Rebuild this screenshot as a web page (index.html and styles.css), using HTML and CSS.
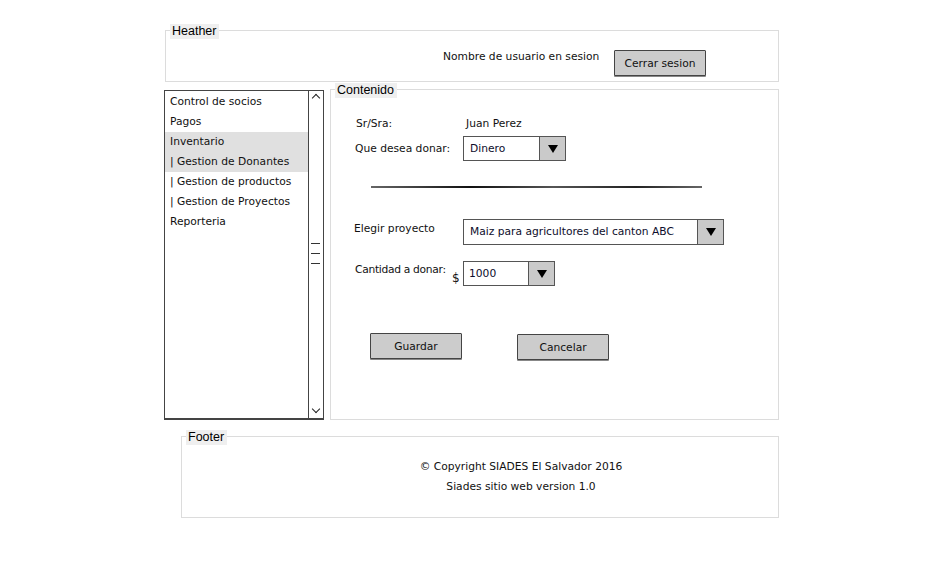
FILE: index.html
```html
<!DOCTYPE html>
<html lang="es">
<head>
    <meta charset="UTF-8">
    <meta name="viewport" content="width=device-width, initial-scale=1.0">
    <title>SIADES - Donaciones</title>
    <link rel="stylesheet" href="styles.css">
</head>
<body>
    <div class="page">
        <div class="panel header">
            <span class="legend">Heather</span>
            <div class="user-bar">
                <span class="user-name">Nombre de usuario en sesion</span>
                <button class="btn">Cerrar sesion</button>
            </div>
        </div>

        <div class="main">
            <div class="menu">
                <ul class="menu-list">
                    <li>Control de socios</li>
                    <li>Pagos</li>
                    <li class="selected">Inventario</li>
                    <li class="selected">| Gestion de Donantes</li>
                    <li>| Gestion de productos</li>
                    <li>| Gestion de Proyectos</li>
                    <li>Reporteria</li>
                </ul>
                <div class="scrollbar">
                    <span class="arrow-up"></span>
                    <div class="thumb">
                        <span></span><span></span><span></span>
                    </div>
                    <span class="arrow-down"></span>
                </div>
            </div>

            <div class="panel content">
                <span class="legend">Contenido</span>
                <div class="form">
                    <div class="form-row row-name">
                        <span class="label">Sr/Sra:</span>
                        <span class="value">Juan Perez</span>
                    </div>
                    <div class="form-row">
                        <span class="label">Que desea donar:</span>
                        <div class="select select-small">
                            <span class="select-text">Dinero</span>
                            <span class="select-arrow"><i></i></span>
                        </div>
                    </div>
                    <div class="divider"></div>
                    <div class="form-row row-project">
                        <span class="label label-up">Elegir proyecto</span>
                        <div class="select select-wide">
                            <span class="select-text">Maiz para agricultores del canton ABC</span>
                            <span class="select-arrow"><i></i></span>
                        </div>
                    </div>
                    <div class="form-row row-amount">
                        <span class="label label-up">Cantidad a donar:</span>
                        <span class="currency">$</span>
                        <div class="select select-amount">
                            <span class="select-text">1000</span>
                            <span class="select-arrow"><i></i></span>
                        </div>
                    </div>
                    <div class="actions">
                        <button class="btn btn-save">Guardar</button>
                        <button class="btn btn-cancel">Cancelar</button>
                    </div>
                </div>
            </div>
        </div>

        <div class="panel footer">
            <span class="legend">Footer</span>
            <p>&copy; Copyright SIADES El Salvador 2016</p>
            <p>Siades sitio web version 1.0</p>
        </div>
    </div>
</body>
</html>
```

FILE: styles.css
```css
body {
    margin: 0;
    background: #fff;
    font-family: "DejaVu Sans", sans-serif;
    font-size: 10.7px;
    color: #111;
}
.page {
    padding: 30px 0 0 164px;
}
.panel {
    position: relative;
    border: 1px solid #dcdcdc;
    box-sizing: border-box;
}
.legend {
    position: absolute;
    top: -7px;
    left: 4px;
    padding: 0 3px 0 2px;
    background: #efefef;
    font-family: "Liberation Sans", sans-serif;
    font-size: 12.5px;
    line-height: 15px;
    color: #000;
}

/* header */
.header {
    margin-left: 1px;
    width: 614px;
    height: 52px;
}
.user-bar {
    display: flex;
    align-items: flex-start;
    padding: 19px 0 0 277px;
}
.user-name {
    width: 171px;
    line-height: 14px;
}
.btn {
    width: 92px;
    height: 26px;
    padding: 0;
    background: #cccccc;
    border: 1px solid #444;
    border-radius: 1px;
    font-family: "DejaVu Sans", sans-serif;
    font-size: 10.7px;
    color: #111;
    box-shadow: 0 1px 0 #888;
}

/* main row */
.main {
    display: flex;
    gap: 6px;
    margin-top: 7px;
}
.menu {
    display: flex;
    width: 160px;
    height: 330px;
    margin-top: 1px;
    box-sizing: border-box;
    border: 1px solid #444;
    border-bottom-width: 2px;
}
.menu-list {
    flex: 1;
    list-style: none;
    margin: 0;
    padding: 0;
}
.menu-list li {
    height: 20px;
    line-height: 20px;
    padding-left: 5px;
}
.menu-list li:first-child {
    margin-top: 1px;
}
.menu-list li.selected {
    background: #e0e0e0;
}
.scrollbar {
    position: relative;
    width: 14px;
    border-left: 1px solid #444;
}
.arrow-up,
.arrow-down {
    position: absolute;
    left: 4px;
    width: 5px;
    height: 5px;
    border-left: 1px solid #222;
    border-top: 1px solid #222;
}
.arrow-up {
    top: 4px;
    transform: rotate(45deg);
}
.arrow-down {
    bottom: 6px;
    transform: rotate(225deg);
}
.thumb {
    position: absolute;
    top: 152px;
    left: 2px;
}
.thumb span {
    display: block;
    width: 9px;
    height: 1px;
    margin-bottom: 9px;
    background: #333;
}

/* content */
.content {
    width: 449px;
    height: 331px;
}
.form {
    padding: 25px 0 0 24px;
}
.form-row {
    display: flex;
    align-items: center;
}
.label {
    width: 108px;
    flex-shrink: 0;
    white-space: nowrap;
}
.label-up {
    align-self: flex-start;
    margin-top: 2px;
}
.row-name {
    height: 16px;
    margin-bottom: 5px;
}
.row-name .label {
    padding-left: 1px;
    width: 110px;
}
.select {
    display: flex;
    height: 25px;
    box-sizing: border-box;
    border: 1px solid #555;
    background: #fff;
}
.select-text {
    flex: 1;
    line-height: 23px;
    padding-left: 6px;
    color: #0d0d2b;
}
.select-arrow {
    display: flex;
    align-items: center;
    justify-content: center;
    width: 25px;
    border-left: 1px solid #555;
    background: #cacaca;
}
.select-arrow i {
    width: 0;
    height: 0;
    border-left: 5px solid transparent;
    border-right: 5px solid transparent;
    border-top: 8px solid #000;
}
.select-small {
    width: 103px;
}
.select-wide {
    width: 261px;
    height: 26px;
}
.select-amount {
    width: 92px;
}
.select-amount .select-text {
    padding-left: 5px;
}
.divider {
    width: 331px;
    height: 2px;
    margin: 25px 0 0 16px;
    background: linear-gradient(to right, #666, #111 30%, #555 55%, #222 80%, #666);
}
.row-project {
    margin-top: 31px;
}
.row-project .label {
    margin-left: -1px;
    width: 109px;
    margin-top: 3px;
}
.row-amount {
    margin-top: 16px;
}
.row-amount .label {
    width: 97px;
    margin-top: 2px;
    letter-spacing: -0.3px;
}
.currency {
    width: 11px;
    align-self: flex-end;
    margin-bottom: 1px;
    font-size: 12px;
}
.actions {
    display: flex;
    gap: 55px;
    margin: 47px 0 0 15px;
}
.btn-cancel {
    margin-top: 1px;
}

/* footer */
.footer {
    width: 598px;
    height: 82px;
    margin: 16px 0 0 17px;
    padding: 20px 0 0 82px;
    text-align: center;
}
.footer p {
    margin: 0;
    line-height: 20px;
}
```
